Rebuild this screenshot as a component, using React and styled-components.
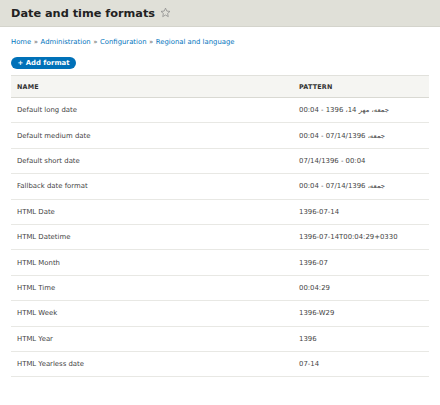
import styled, { createGlobalStyle } from 'styled-components';

const GlobalStyle = createGlobalStyle`
  html, body {
    margin: 0;
    padding: 0;
    background: #fff;
  }
  body {
    font-family: "DejaVu Sans", "Noto Sans", sans-serif;
    color: #333;
  }
`;

const PageHeader = styled.div`
  background: #e0e0d8;
  border-bottom: 1px solid #d4d4cc;
  height: 26px;
  padding: 0 11px;
  display: flex;
  align-items: center;
`;

const Title = styled.h1`
  margin: 0;
  font-size: 11.3px;
  font-weight: 700;
  color: #222;
  display: flex;
  align-items: center;
  gap: 5px;
`;

const Star = styled.svg`
  width: 11px;
  height: 11px;
  margin-top: -1px;
`;

const Content = styled.div`
  padding: 0 11px;
`;

const Breadcrumb = styled.nav`
  margin-top: 11px;
  font-size: 6.85px;
  line-height: 8px;
  color: #333;

  & a {
    color: #0074bd;
    text-decoration: none;
  }
`;

const Sep = styled.span`
  color: #666;
  margin: 0 2.6px;
`;

const AddButton = styled.a`
  display: inline-flex;
  align-items: center;
  margin-top: 11px;
  height: 12px;
  padding: 0 6.5px;
  border-radius: 10px;
  background: #0071b8;
  color: #fff;
  font-size: 6.9px;
  font-weight: 700;
  text-decoration: none;
`;

const Table = styled.table`
  margin-top: 6px;
  width: 418px;
  border-collapse: collapse;
  font-size: 6.9px;
`;

const HeadRow = styled.tr`
  background: #f5f5f2;
  border-top: 1px solid #e1e1dc;
  border-bottom: 1px solid #d9d9d3;
`;

const Th = styled.th`
  text-align: left;
  height: 21px;
  padding: 0 6px;
  font-weight: 700;
  font-size: 6.4px;
  color: #333;
  letter-spacing: 0.2px;
  width: ${(p) => p.w || 'auto'};
`;

const Row = styled.tr`
  border-bottom: 1px solid #e8e8e4;
`;

const Td = styled.td`
  height: 24.4px;
  padding: 0 6px;
  color: #444;
`;

const rows = [
  ['Default long date', 'جمعه، مهر 14، 1396 - 00:04', true],
  ['Default medium date', 'جمعه، 07/14/1396 - 00:04', true],
  ['Default short date', '07/14/1396 - 00:04'],
  ['Fallback date format', 'جمعه، 07/14/1396 - 00:04', true],
  ['HTML Date', '1396-07-14'],
  ['HTML Datetime', '1396-07-14T00:04:29+0330'],
  ['HTML Month', '1396-07'],
  ['HTML Time', '00:04:29'],
  ['HTML Week', '1396-W29'],
  ['HTML Year', '1396'],
  ['HTML Yearless date', '07-14'],
];

export default function App() {
  return (
    <>
      <GlobalStyle />
      <PageHeader>
        <Title>
          Date and time formats
          <Star viewBox="0 0 24 24" fill="none" stroke="#888" strokeWidth="1.6" strokeLinejoin="round">
            <polygon points="12,2.5 14.9,8.9 21.8,9.6 16.6,14.2 18.1,21 12,17.5 5.9,21 7.4,14.2 2.2,9.6 9.1,8.9" />
          </Star>
        </Title>
      </PageHeader>
      <Content>
        <Breadcrumb>
          <a href="#">Home</a>
          <Sep>»</Sep>
          <a href="#">Administration</a>
          <Sep>»</Sep>
          <a href="#">Configuration</a>
          <Sep>»</Sep>
          <a href="#">Regional and language</a>
        </Breadcrumb>
        <AddButton href="#">+ Add format</AddButton>
        <Table>
          <thead>
            <HeadRow>
              <Th w="270px">NAME</Th>
              <Th>PATTERN</Th>
            </HeadRow>
          </thead>
          <tbody>
            {rows.map(([name, pattern, rtl]) => (
              <Row key={name}>
                <Td>{name}</Td>
                <Td>{rtl ? <bdi dir="rtl">{pattern}</bdi> : pattern}</Td>
              </Row>
            ))}
          </tbody>
        </Table>
      </Content>
    </>
  );
}
